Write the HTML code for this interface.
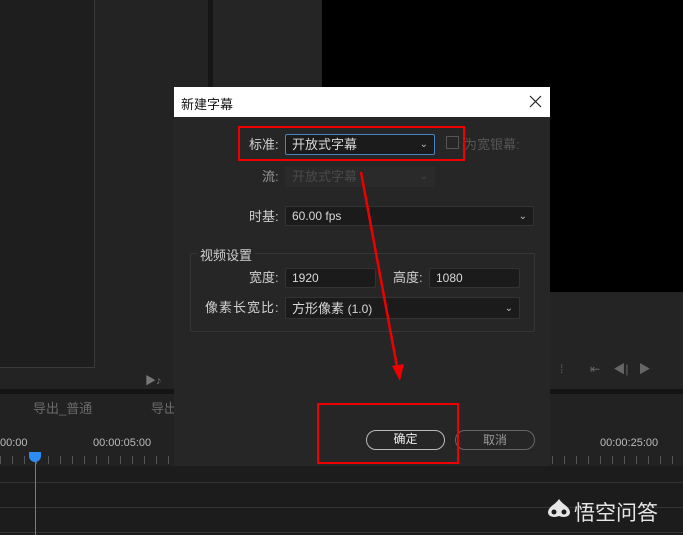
<!DOCTYPE html>
<html><head><meta charset="utf-8"><style>
*{margin:0;padding:0;box-sizing:border-box}
body{width:683px;height:535px;overflow:hidden;background:#1f1f1f;position:relative;font-family:"Liberation Sans","Noto Sans CJK SC",sans-serif;}
.a{position:absolute}
.t{position:absolute;color:#cfcfcf;font-size:13px;white-space:nowrap}
.box{position:absolute;background:#1b1b1b;border:1px solid #333;border-radius:2px;color:#d8d8d8;font-size:12px;padding-left:6px;line-height:19px}
.chev{position:absolute;right:6px;top:0;color:#bbb;font-size:10px}
</style></head><body>
<div class="a" style="left:0;top:0;width:210px;height:390px;background:#232323"></div>
<div class="a" style="left:0;top:0;width:95px;height:368px;background:#1e1e1e;border-right:1px solid #3a3a3a;border-bottom:1px solid #3a3a3a"></div>
<div class="a" style="left:208px;top:0;width:5px;height:390px;background:#161616"></div>
<div class="a" style="left:213px;top:0;width:109px;height:390px;background:#252525"></div>
<div class="a" style="left:322px;top:0;width:361px;height:292px;background:#000"></div>
<div class="a" style="left:322px;top:292px;width:361px;height:98px;background:#242424"></div>
<div class="t" style="left:145px;top:372px;color:#777;font-size:11px">▶♪</div>
<div class="t" style="left:560px;top:360px;color:#666;font-size:12px">⁞&nbsp;&nbsp;&nbsp;&nbsp;&nbsp;&nbsp;&nbsp;&nbsp;⇤&nbsp;&nbsp;&nbsp;&nbsp;◀|&nbsp;&nbsp;&nbsp;▶</div>
<div class="a" style="left:0;top:389px;width:683px;height:5px;background:#141414"></div>
<div class="a" style="left:0;top:394px;width:683px;height:72px;background:#222"></div>
<div class="t" style="left:33px;top:398px;color:#6a6a6a">导出_普通</div>
<div class="t" style="left:151px;top:398px;color:#6a6a6a">导出</div>
<div class="t" style="left:0;top:437px;color:#bbb;font-size:11px">00:00</div>
<div class="t" style="left:93px;top:437px;color:#bbb;font-size:11px">00:00:05:00</div>
<div class="t" style="left:600px;top:437px;color:#bbb;font-size:11px">00:00:25:00</div>
<div class="a" style="left:0;top:456px;width:683px;height:8px;background:repeating-linear-gradient(90deg,#555 0 1px,transparent 1px 12px)"></div>
<div class="a" style="left:0;top:466px;width:683px;height:69px;background:#1c1c1c"></div>
<div class="a" style="left:0;top:482px;width:683px;height:1px;background:#333"></div>
<div class="a" style="left:0;top:507px;width:683px;height:1px;background:#333"></div>
<div class="a" style="left:0;top:532px;width:683px;height:1px;background:#333"></div>
<div class="a" style="left:35px;top:452px;width:1px;height:83px;background:#2e8cf0"></div>
<div class="a" style="left:29px;top:452px;width:12px;height:10px;background:#2e8cf0;border-radius:0 0 6px 6px"></div>
<svg class="a" style="left:545px;top:497px" width="28" height="24"><path d="M14 2 C10 8 4 9 3 15 C3 20 9 21 14 19 C19 21 25 20 25 15 C24 9 18 8 14 2Z" fill="#e6e6e6"/><circle cx="9" cy="15" r="2.5" fill="#1c1c1c"/><circle cx="19" cy="15" r="2.5" fill="#1c1c1c"/></svg>
<div class="t" style="left:574px;top:497px;color:#e6e6e6;font-size:21px">悟空问答</div>
<div class="a" style="left:174px;top:87px;width:376px;height:379px;background:#262626"></div>
<div class="a" style="left:174px;top:87px;width:376px;height:30px;background:#fff"></div>
<div class="t" style="left:181px;top:94px;color:#111">新建字幕</div>
<svg class="a" style="left:529px;top:95px" width="13" height="13"><path d="M1 1L12 12M12 1L1 12" stroke="#222" stroke-width="1.2"/></svg>
<div class="t" style="left:249px;top:134px">标准:</div>
<div class="box" style="left:285px;top:134px;width:150px;height:21px;border-color:#4a82c0;font-size:13px">开放式字幕<span class="chev">⌄</span></div>
<div class="a" style="left:446px;top:136px;width:13px;height:13px;border:1px solid #555"></div>
<div class="t" style="left:464px;top:134px;color:#555">为宽银幕:</div>
<div class="t" style="left:262px;top:166px;color:#999">流:</div>
<div class="box" style="left:285px;top:166px;width:150px;height:21px;background:#2a2a2a;border-color:#2a2a2a;color:#4a4a4a;font-size:13px">开放式字幕<span class="chev" style="color:#444">⌄</span></div>
<div class="t" style="left:249px;top:206px">时基:</div>
<div class="box" style="left:285px;top:206px;width:249px;height:20px">60.00 fps<span class="chev">⌄</span></div>
<div class="a" style="left:190px;top:253px;width:345px;height:79px;border:1px solid #363636;border-radius:2px"></div>
<div class="t" style="left:197px;top:245px;background:#262626;padding:0 3px">视频设置</div>
<div class="t" style="left:249px;top:267px">宽度:</div>
<div class="box" style="left:285px;top:268px;width:91px;height:20px">1920</div>
<div class="t" style="left:393px;top:267px">高度:</div>
<div class="box" style="left:429px;top:268px;width:91px;height:20px">1080</div>
<div class="t" style="left:205px;top:297px;letter-spacing:1px">像素长宽比:</div>
<div class="box" style="left:285px;top:297px;width:235px;height:22px;line-height:21px;font-size:13px">方形像素 <span style="font-size:12px">(1.0)</span><span class="chev">⌄</span></div>
<div class="a" style="left:366px;top:430px;width:79px;height:20px;border:1.5px solid #bbb;border-radius:10px;color:#eee;font-size:12px;text-align:center;line-height:17px">确定</div>
<div class="a" style="left:455px;top:430px;width:80px;height:20px;border:1px solid #666;border-radius:10px;color:#999;font-size:12px;text-align:center;line-height:18px">取消</div>
<div class="a" style="left:238px;top:126px;width:227px;height:35px;border:2px solid #e00"></div>
<div class="a" style="left:317px;top:403px;width:142px;height:61px;border:2px solid #e00"></div>
<svg class="a" style="left:0;top:0" width="683" height="535"><line x1="361" y1="172" x2="398" y2="372" stroke="#e00" stroke-width="2.5"/><polygon points="392,366 404,364 400,381" fill="#e00"/></svg>
</body></html>
